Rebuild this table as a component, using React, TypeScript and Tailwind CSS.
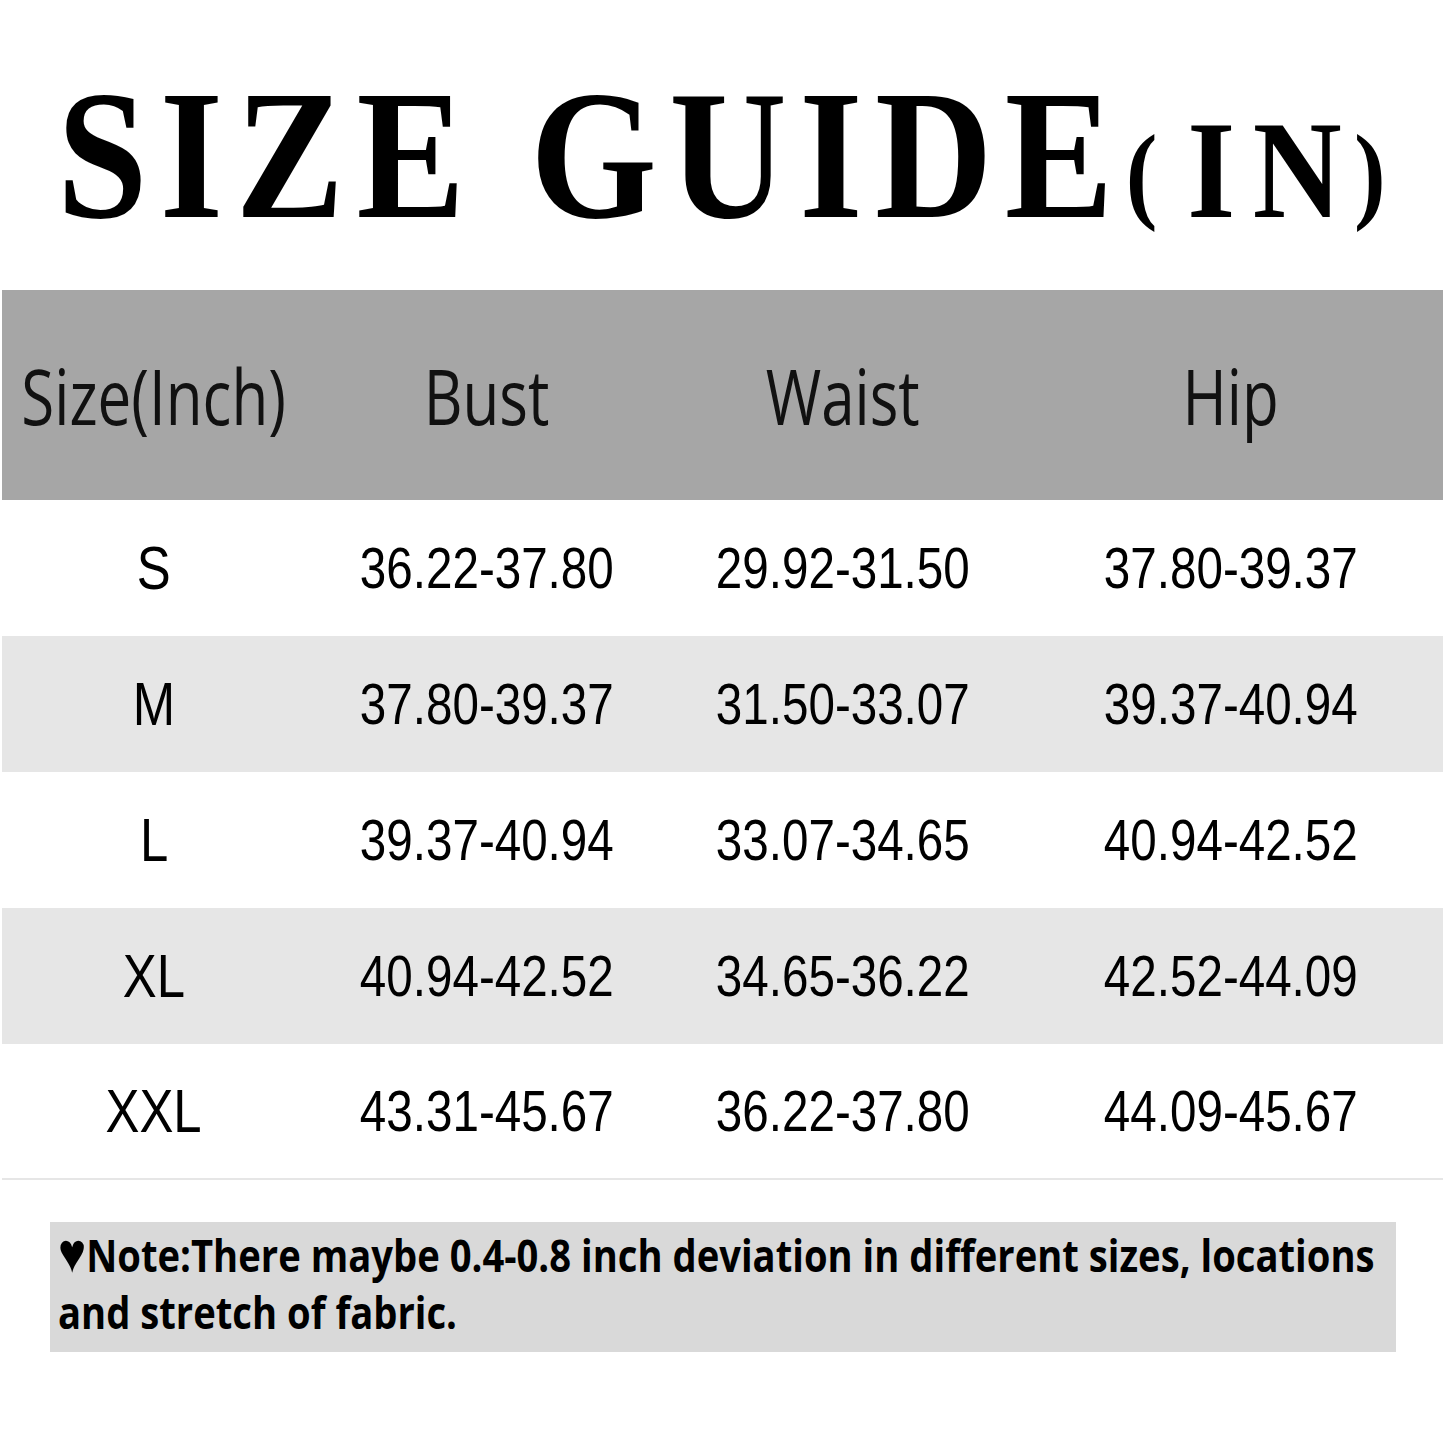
import React from "react";

const rows = [
  ["S", "36.22-37.80", "29.92-31.50", "37.80-39.37"],
  ["M", "37.80-39.37", "31.50-33.07", "39.37-40.94"],
  ["L", "39.37-40.94", "33.07-34.65", "40.94-42.52"],
  ["XL", "40.94-42.52", "34.65-36.22", "42.52-44.09"],
  ["XXL", "43.31-45.67", "36.22-37.80", "44.09-45.67"],
];

const headers = ["Size(Inch)", "Bust", "Waist", "Hip"];

export default function App() {
  return (
    <div className="w-[1445px] h-[1445px] bg-white overflow-hidden">
      <div className="h-[290px] pt-[62px] pl-[57px]">
        <div
          className="origin-left scale-x-[0.88] whitespace-nowrap text-black font-bold text-[185px] leading-none tracking-[14px]"
          style={{ fontFamily: '"Liberation Serif", "Times New Roman", serif' }}
        >
          SIZE GUIDE
          <span className="text-[140px]">
            <span className="text-[108px] align-[8px] tracking-[34px]">(</span>
            <span className="tracking-[20px]">I</span>
            <span className="tracking-[14px]">N</span>
            <span className="text-[108px] align-[8px]">)</span>
          </span>
        </div>
      </div>

      <div className="px-[2px]">
        <div className="grid grid-cols-[304px_362px_350px_1fr] h-[210px] bg-[#a6a6a6] items-center">
          {headers.map((h) => (
            <div key={h} className="flex justify-center">
              <span
                className="scale-x-[0.78] whitespace-nowrap text-[77px] leading-none text-[#111]"
                style={{ fontFamily: '"Open Sans", "Noto Sans", sans-serif' }}
              >
                {h}
              </span>
            </div>
          ))}
        </div>

        {rows.map((r, i) => (
          <div
            key={r[0]}
            className={`grid grid-cols-[304px_362px_350px_1fr] h-[136px] items-center ${
              i % 2 === 1 ? "bg-[#e6e6e6]" : "bg-white"
            } ${i === rows.length - 1 ? "border-b-2 border-[#e6e6e6]" : ""}`}
          >
            {r.map((c, j) => (
              <div key={j} className="flex justify-center">
                <span
                  className={`scale-x-[0.82] whitespace-nowrap leading-none text-black ${
                    j === 0 ? "text-[62px]" : "text-[58px]"
                  }`}
                  style={{ fontFamily: '"Liberation Sans", Arial, sans-serif' }}
                >
                  {c}
                </span>
              </div>
            ))}
          </div>
        ))}
      </div>

      <div className="ml-[50px] mt-[42px] w-[1346px] h-[130px] bg-[#d9d9d9] pl-[8px] pt-[4px]">
        <div
          className="origin-left scale-x-[0.849] whitespace-nowrap font-bold text-[45px] leading-[57px] text-black"
          style={{ fontFamily: '"Open Sans", "Noto Sans", sans-serif' }}
        >
          <div>
            <span className="text-[56px] leading-[0]">♥</span>Note:There maybe 0.4-0.8 inch deviation in different sizes, locations
          </div>
          <div>and stretch of fabric.</div>
        </div>
      </div>
    </div>
  );
}
